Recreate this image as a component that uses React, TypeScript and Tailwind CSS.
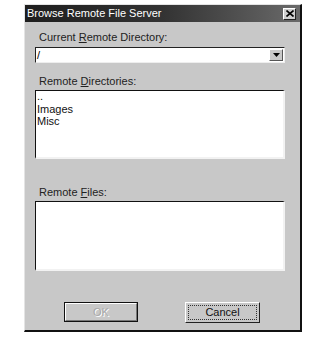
export default function App() {
  const font = { fontFamily: '"Liberation Sans", Arial, sans-serif' };
  return (
    <div className="w-[325px] h-[340px] bg-white pt-[4px] pl-[24px]" style={font}>
      <div className="w-[278px] h-[328px] flex flex-col bg-[#c8c8c8] border-l border-t border-l-[#e4e4e4] border-t-[#e4e4e4] border-r-2 border-b-2 border-r-[#111] border-b-[#111]">
        {/* title bar */}
        <div className="h-[17px] flex items-center justify-between pl-[2px] pr-[4px] bg-gradient-to-r from-[#1e1e1e] via-[#333] to-[#6a6a6a]">
          <span className="text-white text-[11px] leading-none">Browse Remote File Server</span>
          <div className="w-[13px] h-[12px] bg-[#cfcfcf] border-t border-l border-white border-r border-b border-r-[#222] border-b-[#222] flex items-center justify-center">
            <svg width="8" height="7" viewBox="0 0 8 7">
              <path d="M0.5 0.5 L7.5 6.5 M7.5 0.5 L0.5 6.5" stroke="#000" strokeWidth="1.6" />
            </svg>
          </div>
        </div>

        <div className="flex flex-col pl-[10px] pr-[15px]">
          <div className="mt-[8px] pl-[4px] h-[14px] text-[11px] leading-[14px] text-[#222]">
            Current <span className="underline">R</span>emote Directory:
          </div>
          <div className="mt-[3px] h-[16px] bg-white border-t border-l border-t-[#222] border-l-[#222] border-r border-b border-r-[#eee] border-b-[#eee] flex items-center justify-between pr-[1px]">
            <span className="pl-[1px] text-[11px] leading-none">/</span>
            <div className="w-[14px] h-[12px] bg-[#c8c8c8] border-t border-l border-white border-r border-b border-r-[#555] border-b-[#555] flex items-center justify-center">
              <svg width="7" height="4" viewBox="0 0 7 4">
                <path d="M0 0 H7 L3.5 4 Z" fill="#000" />
              </svg>
            </div>
          </div>

          <div className="mt-[11px] pl-[4px] h-[14px] text-[11px] leading-[14px] text-[#222]">
            Remote <span className="underline">D</span>irectories:
          </div>
          <div className="mt-[2px] h-[69px] bg-white border-t border-l border-t-[#111] border-l-[#111] border-r-2 border-b-2 border-r-[#f2f2f2] border-b-[#f2f2f2] pt-[1px] pl-[1px] text-[11px] leading-[12px] text-[#111]">
            <div className="h-[11px] leading-[9px]">..</div>
            <div>Images</div>
            <div>Misc</div>
          </div>

          <div className="mt-[26px] pl-[4px] h-[14px] text-[11px] leading-[14px] text-[#222]">
            Remote <span className="underline">F</span>iles:
          </div>
          <div className="mt-[2px] h-[70px] bg-white border-t border-l border-t-[#111] border-l-[#111] border-r-2 border-b-2 border-r-[#f2f2f2] border-b-[#f2f2f2]" />

          <div className="mt-[31px] flex gap-[47px] pl-[29px]">
            <div className="w-[74px] h-[20px] border border-[#111] bg-[#c8c8c8] flex items-center justify-center">
              <div className="w-full h-full border-t border-l border-white border-r border-b border-r-[#777] border-b-[#777] flex items-center justify-center text-[11px] text-[#a8a8a8] [text-shadow:1px_1px_0_#fff]">
                OK
              </div>
            </div>
            <div className="w-[75px] h-[21px] bg-[#c8c8c8] border-t border-l border-white border-r border-b border-r-[#222] border-b-[#222] p-[2px]">
              <div className="w-full h-full border border-dotted border-[#333] flex items-center justify-center text-[11px] text-[#111]">
                Cancel
              </div>
            </div>
          </div>
        </div>
      </div>
    </div>
  );
}
